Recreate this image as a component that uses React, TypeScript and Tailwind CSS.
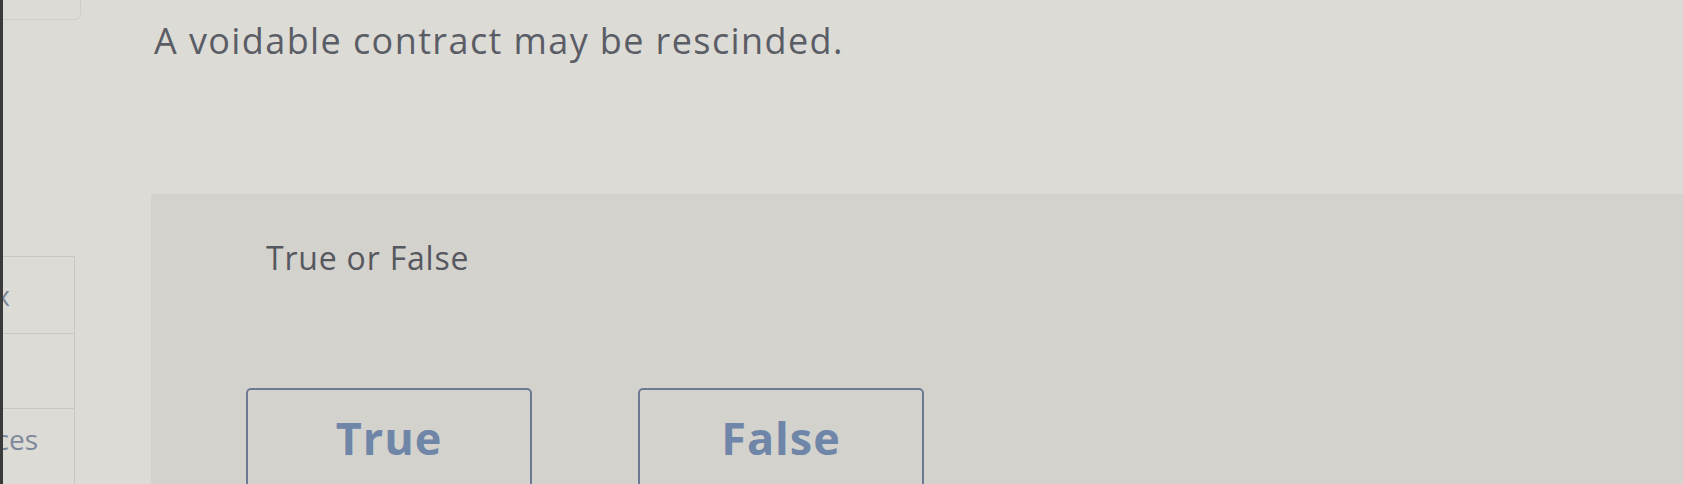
const choices = ["True", "False"];

function SideNav() {
  return (
    <aside className="w-[148px] shrink-0 flex flex-col">
      <div className="w-[78px] h-[20px] border-r border-b border-[#cfcdc8] rounded-br-md" />
      <div className="mt-[236px] w-[72px] flex-1 border-t border-r border-[#c9c7c2] flex flex-col text-[#7d889c] text-[28px] leading-none">
        <div className="h-[77px] border-b border-[#c9c7c2] flex items-center justify-end pr-[64px] overflow-hidden whitespace-nowrap">
          <span>Inbox</span>
        </div>
        <div className="h-[75px] border-b border-[#c9c7c2]" />
        <div className="flex-1 flex items-start pt-[16px] justify-end pr-[36px] overflow-hidden whitespace-nowrap">
          <span>Resources</span>
        </div>
      </div>
    </aside>
  );
}

export default function App() {
  return (
    <div
      className="w-[1683px] h-[484px] overflow-hidden flex bg-[#dddbd6]"
      style={{ fontFamily: "'Open Sans', 'Noto Sans', sans-serif" }}
    >
      <div className="w-[3px] shrink-0 bg-[#3a3a3a]" />
      <SideNav />
      <main className="flex-1 flex flex-col">
        <h1 className="pl-[3px] pt-[18px] text-[36px] leading-[46px] tracking-[1.4px] text-[#5b5d66] font-normal">
          A voidable contract may be rescinded.
        </h1>
        <section className="mt-[130px] flex-1 bg-[#d4d2cd] pl-[115px] pt-[44px]">
          <p className="text-[32px] leading-[40px] tracking-[0.8px] text-[#56585f]">True or False</p>
          <div className="mt-[110px] flex gap-[106px] -ml-[20px]">
            {choices.map((c) => (
              <button
                key={c}
                className="w-[286px] h-[120px] border-2 border-[#6c7a93] rounded-[5px] flex justify-center pt-[25px] text-[45px] leading-none tracking-[1px] font-bold text-[#6f86a8]"
              >
                {c}
              </button>
            ))}
          </div>
        </section>
      </main>
    </div>
  );
}
